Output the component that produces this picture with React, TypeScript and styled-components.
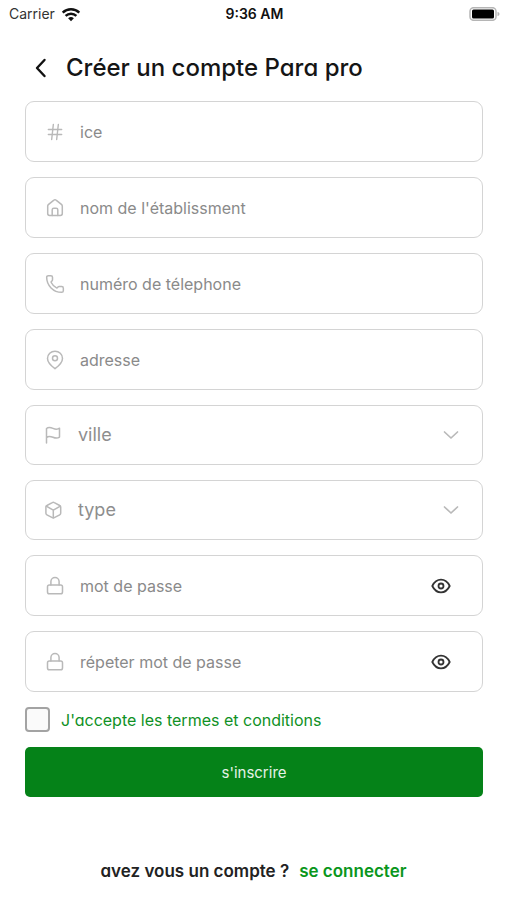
import React, { useState } from "react";
import styled, { createGlobalStyle } from "styled-components";
import { Hash, Phone } from "lucide-react";

const ui = `Inter, "Liberation Sans", sans-serif`;

const GlobalStyle = createGlobalStyle`
  *, *::before, *::after { box-sizing: border-box; }
  body { margin: 0; background: #fff; color: #1b1b1b; font-family: ${ui}; }
  button, input, select { font: inherit; }
`;

const Screen = styled.div`
  display: flex;
  flex-direction: column;
  min-height: 100vh;
  background: #fff;
`;

const StatusBar = styled.div`
  display: grid;
  grid-template-columns: 1fr auto 1fr;
  align-items: center;
  height: 28px;
  padding: 0 7px 0 9px;
  font-size: 14px;
  line-height: 20px;
`;

const Carrier = styled.span`
  display: flex;
  align-items: center;
  gap: 6px;
  color: #333;
`;

const Clock = styled.time`
  font-weight: 600;
  color: #111;
`;

const BatterySlot = styled.span`
  display: flex;
  justify-content: flex-end;
`;

const Header = styled.header`
  display: flex;
  align-items: center;
  gap: 12px;
  height: 73px;
  padding: 6px 25px 0;
`;

const BackButton = styled.button`
  display: flex;
  padding: 2px;
  margin-left: 3px;
  border: 0;
  background: none;
  color: #111;
  cursor: pointer;
`;

const Title = styled.h1`
  margin: 0;
  font-size: 24px;
  line-height: 32px;
  font-weight: 500;
  font-feature-settings: "cv11";
  color: #151515;
`;

const Form = styled.form`
  display: flex;
  flex-direction: column;
  gap: 15px;
  padding: 0 24px 0 25px;
`;

const Field = styled.div<{ $compact?: boolean }>`
  display: flex;
  align-items: center;
  gap: ${(p) => (p.$compact ? 14 : 15)}px;
  height: ${(p) => (p.$compact ? 60 : 61)}px;
  padding: 0 ${(p) => (p.$compact ? 21 : 31)}px 0 ${(p) => (p.$compact ? 18 : 19)}px;
  border: 1px solid #d4d4d4;
  border-radius: 9px;
  color: #b9b9b9;

  svg { flex: none; }
`;

const TextInput = styled.input`
  flex: 1;
  min-width: 0;
  height: 40px;
  padding: 0;
  border: 0;
  outline: 0;
  background: none;
  font-size: 16px;
  color: #333;

  &::placeholder { color: #8a8a8a; opacity: 1; }
`;

const SelectInput = styled.select`
  flex: 1;
  min-width: 0;
  height: 40px;
  padding: 0 0 2px;
  border: 0;
  outline: 0;
  appearance: none;
  background: none;
  font-size: 18px;
  font-feature-settings: "cv11";
  color: #8e8e8e;
`;

const EyeButton = styled.button`
  display: flex;
  padding: 0;
  border: 0;
  background: none;
  color: #333;
  cursor: pointer;
`;

const Terms = styled.label`
  display: flex;
  align-items: center;
  gap: 11px;
  height: 25px;
  font-size: 16px;
  font-feature-settings: "cv11";
  color: #0f9125;
`;

const Checkbox = styled.input`
  appearance: none;
  flex: none;
  width: 25px;
  height: 25px;
  margin: 0;
  border: 2px solid #a3a3a3;
  border-radius: 4px;
  background: #fafafa;

  &:checked { background: #058218; }
`;

const SubmitButton = styled.button`
  height: 50px;
  border: 0;
  border-radius: 5px;
  background: #058218;
  color: #e4f2e6;
  font-size: 15px;
  font-feature-settings: "cv11";
  cursor: pointer;
`;

const Footer = styled.footer`
  display: flex;
  justify-content: center;
  gap: 10px;
  margin-top: auto;
  padding: 0 16px 17px;
  font-size: 17px;
  line-height: 24px;
  font-weight: 600;
  font-feature-settings: "cv11";
  color: #222;
`;

const SignInLink = styled.a`
  color: #0a961c;
  text-decoration: none;
`;

type GlyphProps = { children: React.ReactNode; width?: number; stroke?: number };

const Glyph = ({ children, width = 20, stroke = 1.5 }: GlyphProps) => (
  <svg width={width} height="20" viewBox={`0 0 ${width} 20`} fill="none" stroke="currentColor"
    strokeWidth={stroke} strokeLinecap="round" strokeLinejoin="round" aria-hidden="true">
    {children}
  </svg>
);

const HomeIcon = () => (
  <Glyph>
    <path d="M2.7 8.2c0-.8.3-1.3.9-1.800l5-4.100c.8-.7 2-.7 2.800 0l5 4.100c.6.5.9 1 .9 1.800v7.400c0 1.100-.8 1.900-1.900 1.900H4.600c-1.100 0-1.900-.8-1.900-1.900z" />
    <path d="M7.200 17.500v-5.700c0-1 .6-1.600 1.600-1.600h2.400c1 0 1.600.6 1.600 1.600v5.700" />
  </Glyph>
);

const PinIcon = () => (
  <Glyph>
    <path d="M10 18.700C6.500 16 2.500 12.700 2.500 8.400C2.500 4.200 5.900 1.200 10 1.200s7.500 3 7.500 7.200c0 4.300-4 7.600-7.500 10.300z" />
    <circle cx="10" cy="8.300" r="2.500" />
  </Glyph>
);

const FlagIcon = () => (
  <Glyph>
    <path d="M2.500 18V3.500C3.600 2.600 6.200 2.200 9 3.400c2.600 1.100 5 .9 6.500-.2v8.900c-1.500 1.100-3.900 1.300-6.500.2-2.800-1.200-5.400-.8-6.500.3" />
  </Glyph>
);

const CubeIcon = () => (
  <Glyph>
    <path d="M8.300 2.600a2 2 0 0 1 2 0l5.400 2.900a1.800 1.800 0 0 1 1 1.600v6.100a1.800 1.800 0 0 1-1 1.600l-5.400 2.900a2 2 0 0 1-2 0l-5.400-2.900a1.800 1.800 0 0 1-1-1.600V7.100a1.800 1.800 0 0 1 1-1.600z" />
    <path d="M2.300 6.200l7 4 7-4M9.300 10.200v7.600" />
  </Glyph>
);

const LockIcon = () => (
  <Glyph>
    <rect x="2.500" y="9" width="15" height="8.800" rx="1.800" />
    <path d="M5.900 9V5.600a4.100 4.100 0 0 1 8.200 0V9" />
  </Glyph>
);

const ChevronIcon = () => (
  <Glyph stroke={1.7}>
    <path d="M3.500 7l6.500 6 6.500-6" />
  </Glyph>
);

const EyeIcon = () => (
  <Glyph stroke={1.8}>
    <path d="M1.300 10C3.200 6.100 6.300 3.700 10 3.700s6.800 2.400 8.700 6.300c-1.900 3.900-5 6.300-8.700 6.300S3.200 13.900 1.300 10z" />
    <circle cx="10" cy="10" r="2.500" />
  </Glyph>
);

const BackIcon = () => (
  <Glyph width={22} stroke={2.4}>
    <path d="M14.500 2L7 10l7.500 8" />
  </Glyph>
);

const WifiIcon = () => (
  <svg width="20" height="15" viewBox="0 0 20 15" fill="none" stroke="#111" strokeWidth="2.4" aria-hidden="true">
    <path d="M1.700 5.600a12 12 0 0 1 16.600 0M4.600 8.900a7.800 7.800 0 0 1 10.800 0" />
    <path d="M10 14.200L7.100 11.300a4.200 4.200 0 0 1 5.800 0z" fill="#111" stroke="none" />
  </svg>
);

const BatteryIcon = () => (
  <svg width="31" height="14" viewBox="0 0 31 14" aria-hidden="true">
    <rect x="1" y="0.700" width="26" height="12.600" rx="3.500" fill="#fff" stroke="#b5b5b5" strokeWidth="1.500" />
    <rect x="3" y="2.500" width="22" height="9" rx="1.500" fill="#000" />
    <path d="M28.500 5v4c1.500-.4 2-1.200 2-2s-.5-1.600-2-2z" fill="#b5b5b5" />
  </svg>
);

const PasswordField = ({ label }: { label: string }) => {
  const [visible, setVisible] = useState(false);
  return (
    <Field>
      <LockIcon />
      <TextInput type={visible ? "text" : "password"} placeholder={label} aria-label={label} />
      <EyeButton type="button" aria-label="Afficher" onClick={() => setVisible(!visible)}>
        <EyeIcon />
      </EyeButton>
    </Field>
  );
};

const SelectField = ({ icon, label }: { icon: React.ReactNode; label: string }) => (
  <Field $compact>
    {icon}
    <SelectInput aria-label={label} defaultValue="">
      <option value="">{label}</option>
    </SelectInput>
    <ChevronIcon />
  </Field>
);

const textFields = [
  { label: "ice", type: "text", icon: <Hash size={20} strokeWidth={1.7} /> },
  { label: "nom de l'établissment", type: "text", icon: <HomeIcon /> },
  { label: "numéro de télephone", type: "tel", icon: <Phone size={20} strokeWidth={1.8} /> },
  { label: "adresse", type: "text", icon: <PinIcon /> },
];

export default function App() {
  return (
    <Screen>
      <GlobalStyle />
      <StatusBar>
        <Carrier>Carrier <WifiIcon /></Carrier>
        <Clock>9:36 AM</Clock>
        <BatterySlot><BatteryIcon /></BatterySlot>
      </StatusBar>
      <Header>
        <BackButton type="button" aria-label="Retour"><BackIcon /></BackButton>
        <Title>Créer un compte Para pro</Title>
      </Header>
      <Form onSubmit={(e) => e.preventDefault()}>
        {textFields.map((f) => (
          <Field key={f.label}>
            {f.icon}
            <TextInput type={f.type} placeholder={f.label} aria-label={f.label} />
          </Field>
        ))}
        <SelectField label="ville" icon={<FlagIcon />} />
        <SelectField label="type" icon={<CubeIcon />} />
        <PasswordField label="mot de passe" />
        <PasswordField label="répeter mot de passe" />
        <Terms>
          <Checkbox type="checkbox" />
          J'accepte les termes et conditions
        </Terms>
        <SubmitButton type="submit">s'inscrire</SubmitButton>
      </Form>
      <Footer>
        <span>avez vous un compte ?</span>
        <SignInLink href="#connexion">se connecter</SignInLink>
      </Footer>
    </Screen>
  );
}
